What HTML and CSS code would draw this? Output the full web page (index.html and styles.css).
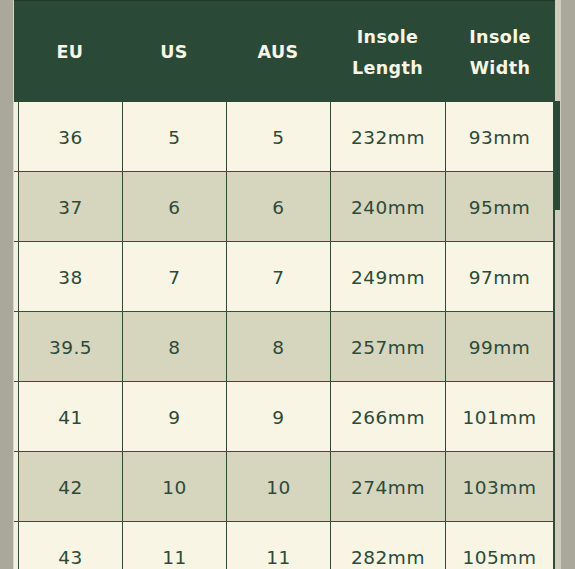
FILE: index.html
```html
<!DOCTYPE html>
<html>
<head>
<meta charset="utf-8">
<link rel="stylesheet" href="styles.css">
</head>
<body>
<div class="page">
  <div class="edge"></div>
  <div class="table">
    <div class="head">
      <div class="gap"></div>
      <div class="hcell">EU</div>
      <div class="hcell">US</div>
      <div class="hcell">AUS</div>
      <div class="hcell">Insole<br>Length</div>
      <div class="hcell">Insole<br>Width</div>
    </div>
    <div class="row"><div class="gap"></div><div class="cell">36</div><div class="cell">5</div><div class="cell">5</div><div class="cell">232mm</div><div class="cell last">93mm</div></div>
    <div class="row alt"><div class="gap"></div><div class="cell">37</div><div class="cell">6</div><div class="cell">6</div><div class="cell">240mm</div><div class="cell last">95mm</div></div>
    <div class="row"><div class="gap"></div><div class="cell">38</div><div class="cell">7</div><div class="cell">7</div><div class="cell">249mm</div><div class="cell last">97mm</div></div>
    <div class="row alt"><div class="gap"></div><div class="cell">39.5</div><div class="cell">8</div><div class="cell">8</div><div class="cell">257mm</div><div class="cell last">99mm</div></div>
    <div class="row"><div class="gap"></div><div class="cell">41</div><div class="cell">9</div><div class="cell">9</div><div class="cell">266mm</div><div class="cell last">101mm</div></div>
    <div class="row alt"><div class="gap"></div><div class="cell">42</div><div class="cell">10</div><div class="cell">10</div><div class="cell">274mm</div><div class="cell last">103mm</div></div>
    <div class="row"><div class="gap"></div><div class="cell">43</div><div class="cell">11</div><div class="cell">11</div><div class="cell">282mm</div><div class="cell last">105mm</div></div>
  </div>
  <div class="track"><div class="thumb"></div></div>
</div>
</body>
</html>
```

FILE: styles.css
```css
html, body {
  margin: 0;
  padding: 0;
  background: #aaa79b;
  overflow: hidden;
}
.page {
  display: flex;
  align-items: flex-start;
  padding-left: 13px;
  height: 569px;
}
.edge {
  width: 1px;
  align-self: stretch;
  background: #d8d5c7;
}
.table {
  width: 541px;
  flex: none;
}
.head {
  display: grid;
  grid-template-columns: 4px 104px 104px 104px 115px 110px;
  height: 102px;
  background: #2a4a37;
  border-top: 1px solid #1f3a2a;
  box-sizing: border-box;
}
.hcell {
  display: flex;
  align-items: center;
  justify-content: center;
  text-align: center;
  padding-top: 2px;
  color: #f8f5e6;
  font-family: "DejaVu Sans", sans-serif;
  font-weight: bold;
  font-size: 17.5px;
  line-height: 31px;
  letter-spacing: 0.4px;
}
.row {
  display: grid;
  grid-template-columns: 4px 104px 104px 104px 115px 110px;
  height: 70px;
  border-bottom: 1px solid #34503f;
  box-sizing: border-box;
  background: #f8f5e4;
}
.row .gap {
  background: #f3f0df;
}
.row.alt .cell {
  background: #d6d6bf;
}
.cell {
  border-left: 1px solid #2f4a38;
  display: flex;
  align-items: center;
  justify-content: center;
  padding-top: 1px;
  color: #2d4a38;
  font-family: "DejaVu Sans", sans-serif;
  font-size: 18.5px;
  letter-spacing: 0.5px;
  font-weight: normal;
}
.cell.last {
  border-right: 2px solid #2f4a38;
}
.track {
  width: 6px;
  height: 569px;
  background: #cfccbf;
  flex: none;
}
.thumb {
  margin-top: 101px;
  width: 5px;
  height: 109px;
  background: #2a4a37;
}
```
